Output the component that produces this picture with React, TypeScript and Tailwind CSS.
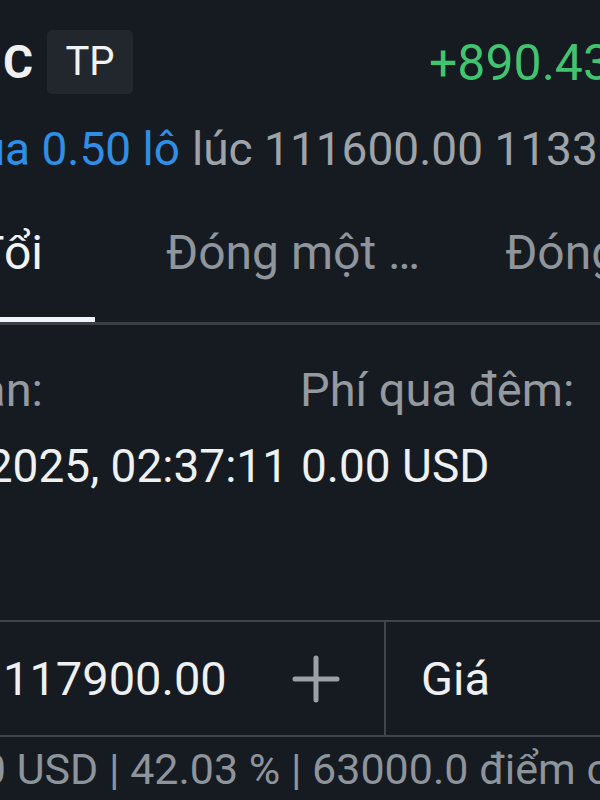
import React from "react";

const Clip = ({ w, className, children }: { w: string; className?: string; children: React.ReactNode }) => (
  <div className={`flex justify-end shrink-0 whitespace-nowrap ${w} ${className ?? ""}`}>
    <span className="shrink-0">{children}</span>
  </div>
);

export default function App() {
  return (
    <div
      className="w-[600px] h-[800px] overflow-hidden bg-[#161b21] text-[#eef0f2] whitespace-nowrap"
      style={{ fontFamily: "Roboto, 'Noto Sans', sans-serif" }}
    >
      {/* header: symbol, badge, profit */}
      <div className="flex items-center h-[124px] text-[46px] leading-[50px]">
        <Clip w="w-[33px]" className="font-bold">BTCUSD C</Clip>
        <div className="ml-[14px] shrink-0 w-[86px] h-[64px] rounded-[5px] bg-[#22272e] flex items-center justify-center text-[40px] text-[#f0f2f4]">
          TP
        </div>
        <div className="ml-[296px] mt-[2px] shrink-0 text-[50px] text-[#3fc470]">+890.43 USD</div>
      </div>

      {/* order line */}
      <div className="flex h-[50px] text-[46px] leading-[50px]">
        <Clip w="w-[180px]" className="text-[#2f8fe8]">Mua 0.50 lô</Clip>
        <div className="ml-[12px] shrink-0 text-[#9ea3aa]">lúc 111600.00 113300.00</div>
      </div>

      {/* tabs */}
      <div className="flex h-[151px] border-b-[3px] border-[#3a3f46] text-[48px] leading-[50px]">
        <div className="w-[95px] shrink-0 flex flex-col">
          <Clip w="w-[43px]" className="mt-[54px] text-[#f1f3f5]">Sửa đổi</Clip>
          <div className="mt-auto h-[5px] w-[95px] bg-[#f1f3f5]" />
        </div>
        <div className="ml-[71px] mt-[54px] shrink-0 text-[#8f959c]">Đóng một …</div>
        <div className="ml-[85px] mt-[54px] shrink-0 text-[#8f959c]">Đóng theo giá</div>
      </div>

      {/* details */}
      <div className="flex mt-[40px] h-[50px] text-[47px] leading-[50px] text-[#959aa1]">
        <div className="w-[300px] shrink-0 flex">
          <Clip w="w-[43px]">Thời gian:</Clip>
        </div>
        <div className="shrink-0">Phí qua đêm:</div>
      </div>
      <div className="flex mt-[26px] h-[50px] text-[46px] leading-[50px] text-[#eef0f2]">
        <div className="w-[301px] shrink-0 flex">
          <Clip w="w-[288px]">22.07.2025, 02:37:11</Clip>
        </div>
        <div className="shrink-0">0.00 USD</div>
      </div>

      {/* price input */}
      <div className="flex mt-[129px] h-[117px] border-y-2 border-[#40454c] text-[47px] leading-[50px]">
        <div className="w-[386px] shrink-0 flex items-center border-r-2 border-[#40454c]">
          <div className="ml-[3px] shrink-0 text-[#eef0f2]">117900.00</div>
          <svg className="ml-[65px] shrink-0" width="48" height="48" viewBox="0 0 48 48">
            <path d="M24 3v42M3 24h42" stroke="#9ca1a8" strokeWidth="5" strokeLinecap="round" />
          </svg>
        </div>
        <div className="flex items-center ml-[35px] text-[#eef0f2]">Giá</div>
      </div>

      {/* summary */}
      <div className="flex mt-[7px] h-[50px] text-[43px] leading-[50px] text-[#8e949b]">
        <Clip w="w-[6px]">3150.00</Clip>
        <div className="shrink-0 whitespace-pre">{" USD | 42.03 % | 63000.0 điểm chênh lệch"}</div>
      </div>
    </div>
  );
}
